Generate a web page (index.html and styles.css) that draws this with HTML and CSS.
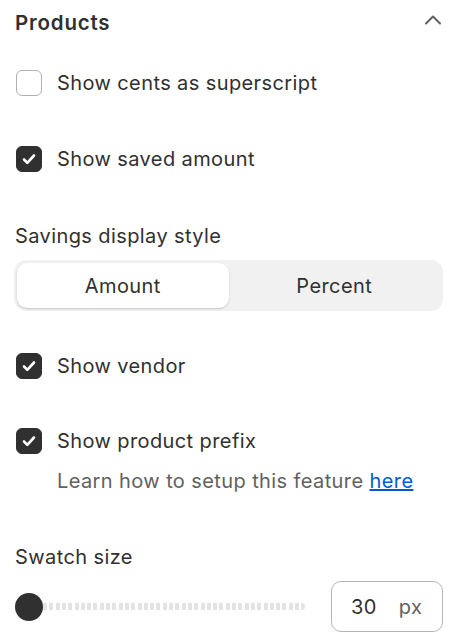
FILE: index.html
```html
<!DOCTYPE html>
<html lang="en">
<head>
    <meta charset="UTF-8">
    <meta name="viewport" content="width=device-width, initial-scale=1.0">
    <title>Products settings</title>
    <link rel="stylesheet" href="styles.css">
</head>
<body>

    <div class="panel">
        <!-- Section header -->
        <div class="panel-header">
            <h2>Products</h2>
            <svg class="chevron" width="18" height="12" viewBox="0 0 18 12">
                <path d="M2 9.5 L9 2.5 L16 9.5" fill="none" stroke="#616161" stroke-width="2" stroke-linecap="round" stroke-linejoin="round"/>
            </svg>
        </div>

        <label class="check-row row-first">
            <span class="checkbox"></span>
            <span>Show cents as superscript</span>
        </label>

        <label class="check-row row-saved">
            <span class="checkbox checked">
                <svg width="26" height="26" viewBox="0 0 26 26"><path d="M8 13.5 L11.3 16.8 L18 9.5" fill="none" stroke="#fff" stroke-width="2.6" stroke-linecap="round" stroke-linejoin="round"/></svg>
            </span>
            <span>Show saved amount</span>
        </label>

        <div class="field-label savings-label">Savings display style</div>
        <div class="segmented">
            <button class="segment active">Amount</button>
            <button class="segment">Percent</button>
        </div>

        <label class="check-row row-vendor">
            <span class="checkbox checked">
                <svg width="26" height="26" viewBox="0 0 26 26"><path d="M8 13.5 L11.3 16.8 L18 9.5" fill="none" stroke="#fff" stroke-width="2.6" stroke-linecap="round" stroke-linejoin="round"/></svg>
            </span>
            <span>Show vendor</span>
        </label>

        <label class="check-row row-prefix">
            <span class="checkbox checked">
                <svg width="26" height="26" viewBox="0 0 26 26"><path d="M8 13.5 L11.3 16.8 L18 9.5" fill="none" stroke="#fff" stroke-width="2.6" stroke-linecap="round" stroke-linejoin="round"/></svg>
            </span>
            <span>Show product prefix</span>
        </label>
        <p class="help-text">Learn how to setup this feature <a href="#">here</a></p>

        <div class="field-label swatch-label">Swatch size</div>
        <div class="range-row">
            <div class="range">
                <span class="range-thumb"></span>
                <span class="range-track"></span>
            </div>
            <div class="number-field">
                <span class="number-value">30</span>
                <span class="number-suffix">px</span>
            </div>
        </div>
    </div>

</body>
</html>
```

FILE: styles.css
```css
body {
    margin: 0;
    font-family: Inter, "Noto Sans", sans-serif;
    color: #303030;
    background-color: #fff;
    letter-spacing: 0.4px;
}
.panel {
    padding: 0 14px 0 15px;
}
.panel-header {
    height: 44px;
    display: flex;
    align-items: center;
    justify-content: space-between;
}
.panel-header h2 {
    margin: 0;
    font-size: 20.5px;
    font-weight: 600;
    letter-spacing: 0.8px;
}
.chevron {
    margin-right: 1px;
    margin-top: -4px;
}
.check-row {
    display: flex;
    align-items: center;
    gap: 15px;
    height: 26px;
    font-size: 20px;
    margin-left: 1px;
}
.row-first { margin-top: 26px; }
.row-saved { margin-top: 50px; }
.row-vendor { margin-top: 42px; }
.row-prefix { margin-top: 49px; }
.checkbox {
    width: 26px;
    height: 26px;
    box-sizing: border-box;
    border: 1.5px solid #b0b0b0;
    border-radius: 6px;
    flex-shrink: 0;
    display: block;
}
.checkbox.checked {
    background-color: #303030;
    border-color: #303030;
}
.checkbox svg {
    display: block;
    margin: -1.5px;
}
.field-label {
    font-size: 20px;
    line-height: 24px;
}
.savings-label { margin-top: 52px; }
.swatch-label { margin-top: 52px; }
.segmented {
    margin-top: 12px;
    height: 51px;
    box-sizing: border-box;
    padding: 3px;
    background-color: #f1f1f1;
    border-radius: 12px;
    display: grid;
    grid-template-columns: 1fr 1fr;
    margin-left: -1px;
}
.segment {
    border: none;
    background: none;
    font-family: inherit;
    font-size: 20px;
    letter-spacing: 0.4px;
    color: #303030;
    border-radius: 10px;
    padding: 0;
}
.segment.active {
    background-color: #fff;
    box-shadow: 0 1px 2px rgba(0, 0, 0, 0.18);
}
.help-text {
    margin: 15px 0 0 42px;
    font-size: 20px;
    line-height: 24px;
    color: #616161;
}
.help-text a {
    color: #005bd3;
}
.range-row {
    margin-top: 12px;
    display: flex;
    align-items: center;
    justify-content: space-between;
}
.range {
    display: flex;
    align-items: center;
    width: 290px;
}
.range-thumb {
    width: 28px;
    height: 28px;
    border-radius: 50%;
    background-color: #303030;
    flex-shrink: 0;
}
.range-track {
    flex: 1;
    height: 7px;
    border-radius: 0 4px 4px 0;
    background: repeating-linear-gradient(to right, #e3e3e3 0, #e3e3e3 4px, transparent 4px, transparent 6.3px);
}
.number-field {
    width: 112px;
    height: 51px;
    box-sizing: border-box;
    border: 1px solid #b5b5b5;
    border-radius: 10px;
    display: flex;
    align-items: center;
    font-size: 20px;
    padding-left: 19px;
}
.number-value {
    color: #303030;
}
.number-suffix {
    margin-left: 22px;
    color: #616161;
}
```
